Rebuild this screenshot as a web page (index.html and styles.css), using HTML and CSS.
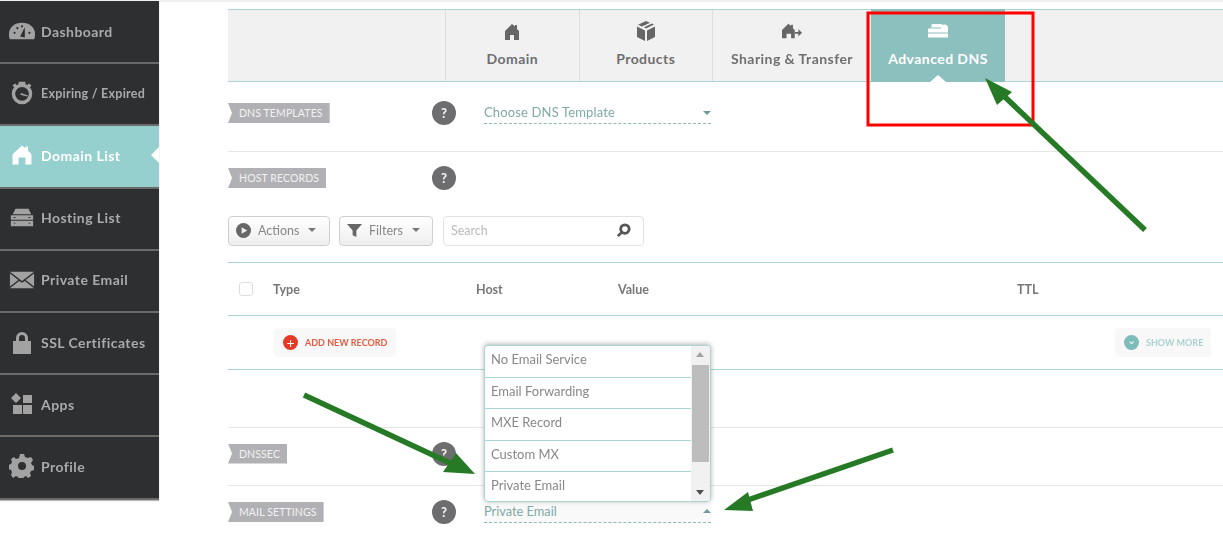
FILE: index.html
```html
<!DOCTYPE html>
<html lang="en">
<head>
<meta charset="utf-8">
<title>Advanced DNS</title>
<link rel="stylesheet" href="styles.css">
</head>
<body>
<div class="page">
  <div class="topstrip"></div>
  <div class="layout">
    <nav class="sidebar">
      <a class="nav-item"><svg class="nav-icon" viewBox="0 0 28 20"><path d="M1 19c-1-2-1-4-1-6C0 6 6 1 14 1s14 5 14 12c0 2 0 4-1 6z" fill="#a2a2a2"/><path d="M12 16l5-10 0 11z" fill="#2e2f30"/><circle cx="6" cy="12" r="1.2" fill="#2e2f30"/><circle cx="9" cy="7" r="1.2" fill="#2e2f30"/><circle cx="14" cy="5" r="1.2" fill="#2e2f30"/><circle cx="22" cy="12" r="1.2" fill="#2e2f30"/></svg><span>Dashboard</span></a>
      <a class="nav-item nav-small"><svg class="nav-icon" viewBox="0 0 28 28"><circle cx="14" cy="15" r="10" fill="none" stroke="#a2a2a2" stroke-width="4"/><path d="M10 1h8v3h-8zM3 5l3-2 2 2-3 3zM25 5l-3-2-2 2 3 3z" fill="#a2a2a2"/><path d="M13 14l8 3-1 1-8-2z" fill="#a2a2a2"/></svg><span>Expiring / Expired</span></a>
      <a class="nav-item nav-active"><svg class="nav-icon" viewBox="-2 -2 28 28"><path d="M12 1l4 3V2h3v5l4 4v12h-7v-8H8v8H1V11z" fill="#fff"/></svg><span>Domain List</span></a>
      <a class="nav-item"><svg class="nav-icon" viewBox="0 0 28 20"><path d="M7 0h14l3 6H4zM2 7h24v5H2zM2 13h24v6H2z" fill="#a2a2a2"/><path d="M5 9h2v1H5zM21 9h2v1h-2zM5 15h2v1H5zM21 15h2v1h-2z" fill="#2e2f30"/></svg><span>Hosting List</span></a>
      <a class="nav-item"><svg class="nav-icon" viewBox="0 0 28 20"><path d="M1 1h26L14 11zM1 3l9 7-9 7zM27 3l-9 7 9 7zM11 11l3 2 3-2 10 8H1z" fill="#a2a2a2"/></svg><span>Private Email</span></a>
      <a class="nav-item"><svg class="nav-icon" viewBox="0 0 24 24"><path d="M6 11V8a6 6 0 0 1 12 0v3h-3V8a3 3 0 0 0-6 0v3z M3 11h18v13H3z" fill="#a2a2a2"/></svg><span>SSL Certificates</span></a>
      <a class="nav-item"><svg class="nav-icon" viewBox="0 0 24 24"><path d="M6 1l5 5-5 5-5-5zM13 3h9v8h-9zM3 13h9v9H3zM13 13h9v9h-9z" fill="#a2a2a2"/></svg><span>Apps</span></a>
      <a class="nav-item"><svg class="nav-icon" viewBox="0 0 24 24"><path d="M10 0h4l1 3 3 1 3-1 2 3-2 3 1 2 2 1v4l-3 1-1 2 1 3-3 2-2-2-2 1-1 2h-4l-1-2-2-1-3 2-2-3 1-3-1-2-3-1v-4l3-1 1-2-1-3 3-2 2 2 3-1z" fill="#a2a2a2"/><circle cx="12" cy="12" r="4" fill="#2e2f30"/></svg><span>Profile</span></a>
    </nav>

    <main class="main">
      <div class="tabs">
        <div class="tab-spacer"></div>
        <div class="tab"><svg class="tab-icon" viewBox="0 0 16 16"><path d="M8 0l3 2.5V1h2v4l2 2v9h-5v-5H6v5H1V7z" fill="#666"/></svg><span>Domain</span></div>
        <div class="tab"><svg class="tab-icon tab-icon-big" viewBox="0 0 20 20"><path d="M10 0l4 1.800-8 3.800-4-1.800zM8 6.200l8-3.800 2 1.200-8 4zM1 5.500l8 4V20l-8-4zM19 5.500l-8 4V20l8-4z" fill="#666"/></svg><span>Products</span></div>
        <div class="tab tab-wide"><svg class="tab-icon tab-icon-big" viewBox="0 -2 22 20"><path d="M7 0l3 2.5V1h2v4l2 2v9h-4v-5H5v5H0V7z" fill="#666"/><path d="M14 9h4V6l4 4-4 4v-3h-4z" fill="#666"/></svg><span>Sharing &amp; Transfer</span></div>
        <div class="tab tab-active"><svg class="tab-icon tab-icon-big" viewBox="0 -3 20 20"><path d="M4 0h10l1 3.500H3zM0 4.500h20v4H0zM0 9.500h20v4H0z" fill="#fff"/><circle cx="16.500" cy="4" r="3.500" fill="#fff"/></svg><span>Advanced DNS</span></div>
      </div>

      <section class="row row-dns">
        <div class="tag">DNS TEMPLATES</div>
        <div class="help">?</div>
        <div class="select">Choose DNS Template<i class="caret-down"></i></div>
      </section>

      <section class="host">
        <div class="row-host">
          <div class="tag">HOST RECORDS</div>
          <div class="help">?</div>
        </div>
        <div class="toolbar">
          <button class="btn btn-actions"><svg class="btn-icon" viewBox="0 0 16 16"><circle cx="8" cy="8" r="8" fill="#666"/><path d="M6 4.500l6 3.500-6 3.500z" fill="#eee"/></svg>Actions<i class="btn-caret"></i></button>
          <button class="btn btn-filters"><svg class="btn-icon" viewBox="0 0 16 16"><path d="M0 1h16l-6 7v7l-4-2V8z" fill="#666"/></svg>Filters<i class="btn-caret"></i></button>
          <div class="search"><span>Search</span><svg class="search-icon" viewBox="0 0 16 16"><circle cx="9.500" cy="6.500" r="4.500" fill="none" stroke="#555" stroke-width="3"/><path d="M6 10l-4 4" stroke="#555" stroke-width="3"/></svg></div>
        </div>
      </section>

      <div class="thead">
        <i class="check"></i>
        <span>Type</span>
        <span>Host</span>
        <span>Value</span>
        <span>TTL</span>
      </div>

      <div class="actions-row">
        <div class="pill pill-add"><i class="dot dot-red">+</i>ADD NEW RECORD</div>
        <div class="pill pill-more"><i class="dot dot-teal">⌄</i>SHOW MORE</div>
      </div>

      <div class="blank"></div>

      <section class="row row-dnssec">
        <div class="tag">DNSSEC</div>
        <div class="help">?</div>
      </section>

      <section class="row row-mail">
        <div class="tag">MAIL SETTINGS</div>
        <div class="help">?</div>
        <div class="select select-open">Private Email<i class="caret-up"></i></div>
      </section>
    </main>
  </div>

  <div class="dropdown">
    <ul class="options">
      <li>No Email Service</li>
      <li>Email Forwarding</li>
      <li>MXE Record</li>
      <li>Custom MX</li>
      <li>Private Email</li>
    </ul>
    <div class="scrollbar"><i class="sb-up"></i><i class="sb-thumb"></i><i class="sb-down"></i></div>
  </div>

  <svg class="annotations" viewBox="0 0 1223 545">
    <rect x="868" y="13" width="165" height="112" fill="none" stroke="#f00" stroke-width="3"/>
    <g stroke="#267a25" stroke-width="5.500" fill="#267a25">
      <path d="M1145 230L1005 97"/>
      <path d="M304 395L450 463"/>
      <path d="M893 450L745 501"/>
    </g>
    <g fill="#267a25">
      <path d="M985 78L1012 92L997 105z"/>
      <path d="M475 474L456 453L443 472z"/>
      <path d="M724 510L748 492L753 511z"/>
    </g>
  </svg>
</div>
</body>
</html>
```
FILE: styles.css
```css
* { box-sizing: border-box; }
html, body { margin: 0; padding: 0; background: #fff; }
body { font-family: "Lato", "Liberation Sans", sans-serif; overflow: hidden; }
.page { position: relative; width: 1223px; height: 545px; overflow: hidden; filter: blur(0.5px); }
.topstrip { height: 2px; background: #efefef; }
.layout { display: flex; align-items: flex-start; }

.sidebar { width: 159px; flex: none; background: #2e2f30; margin-top: -1px; padding-top: 1px; box-shadow: 0 1px 1px #bbb; }
.nav-item { position: relative; display: flex; align-items: center; gap: 6px; height: 62.200px; padding: 0 0 2px 9px; border-bottom: 2px solid #6a6a6a; color: #a8aaab; font-size: 14px; font-weight: 700; letter-spacing: 0.45px; }
.nav-small { font-size: 12.500px; letter-spacing: 0.25px; }
.nav-icon { width: 26px; height: 24px; flex: none; }
.nav-active { background: #96d0ce; color: #fff; }
.nav-active::after { content: ""; position: absolute; right: 0; top: 21px; border: 8px solid transparent; border-left: 0; border-right-color: #fff; }

.main { flex: 1; margin-left: 69px; padding-top: 7px; }
.tabs { display: flex; height: 73px; background: #f1f1f1; border-top: 1px solid #a9d6d4; border-bottom: 1px solid #a9d6d4; }
.tab-spacer { width: 218px; border-right: 1px solid #ddd; }
.tab { width: 133.500px; display: flex; flex-direction: column; align-items: center; justify-content: flex-start; padding-top: 13px; border-right: 1px solid #ddd; color: #6f6f6f; font-size: 14px; font-weight: 700; letter-spacing: 0.45px; white-space: nowrap; }
.tab-wide { width: 158px; border-right: 0; }
.tab-active { position: relative; background: #8cc0bf; color: #fff; border-right: 0; margin-top: -1px; margin-bottom: -1px; padding-top: 14px; width: 134px; }
.tab-active::after { content: ""; position: absolute; left: 59px; bottom: 0; border: 8px solid transparent; border-top: 0; border-bottom: 7px solid #fff; }
.tab-icon { width: 16px; height: 16px; margin: 1px 0 10px; }
.tab-icon-big { width: 20px; height: 20px; margin: -2px 0 9px; }

.row { display: grid; grid-template-columns: 204px 52px 227px; align-items: center; }
.row-dns { height: 70px; border-bottom: 1px solid #e6e6e6; padding-bottom: 7px; }
.tag { justify-self: start; height: 20px; line-height: 20px; padding: 0 7px 0 11px; background: #b1b1b5; color: #f2f2f2; font-size: 10.500px; letter-spacing: 0.12px; clip-path: polygon(0 0, 100% 0, 100% 100%, 0 100%, 4px 50%); }
.help { width: 24px; height: 24px; border-radius: 50%; background: #6d6d6f; color: #eee; font-size: 13px; font-weight: 900; line-height: 24px; text-align: center; }
.select { position: relative; height: 22px; line-height: 20px; color: #7fa9a6; font-size: 13px; letter-spacing: 0.15px; border-bottom: 1px dashed #8fb9b6; }
.caret-down, .caret-up { position: absolute; right: 0; top: 9px; border: 4px solid transparent; border-bottom: 0; border-top: 4px solid #6f9c99; }
.caret-up { border-top: 0; border-bottom: 4px solid #6f9c99; }

.host { height: 110px; padding-top: 14px; }
.row-host { display: grid; grid-template-columns: 204px 52px; align-items: center; height: 22px; }
.toolbar { display: flex; gap: 9px; margin-top: 28px; }
.btn { display: flex; align-items: center; height: 30px; padding: 0 0 2px 7px; border: 1px solid #cfcfcf; border-radius: 4px; background: linear-gradient(#fff, #eee); color: #888; font: 12.500px "Lato", sans-serif; }
.btn-actions { width: 102px; }
.btn-filters { width: 94px; margin-right: 1px; }
.btn-icon { width: 15px; height: 15px; margin-right: 7px; }
.btn-caret { margin-left: 9px; border: 4px solid transparent; border-bottom: 0; border-top: 4px solid #777; }
.search { display: flex; align-items: center; justify-content: space-between; width: 201px; height: 30px; padding: 0 12px 2px 7px; border: 1px solid #e2e2e2; border-radius: 4px; color: #bbb; font-size: 12.500px; }
.search-icon { width: 15px; height: 15px; }

.thead { height: 54px; border-top: 1px solid #a9d6d4; border-bottom: 1px solid #a9d6d4; color: #777; font-size: 12.500px; font-weight: 700; display: grid; grid-template-columns: 34px 203px 142px 399px 1fr; align-items: center; padding-left: 11px; }
.check { width: 14px; height: 14px; border: 1px solid #ddd; border-radius: 3px; }
.actions-row { height: 54px; display: flex; justify-content: space-between; align-items: center; padding: 0 12px 0 46px; border-bottom: 1px solid #a9d6d4; }
.pill { display: flex; align-items: center; height: 29px; background: #f8f8f8; border-radius: 4px; font-size: 9px; font-weight: 700; }
.pill-add { width: 122px; padding-left: 9px; color: #e85c43; }
.pill-more { width: 96px; padding-left: 9px; color: #a9d2d0; }
.dot { width: 15px; height: 15px; border-radius: 50%; margin-right: 7px; text-align: center; color: #fff; font-style: normal; font-size: 14px; line-height: 15px; flex: none; font-weight: 400; }
.dot-red { background: #e33a27; }
.dot-teal { background: #7dbcba; line-height: 10px; font-size: 11px; }

.blank { height: 57px; }
.row-dnssec { height: 59px; border-top: 1px solid #e6e6e6; border-bottom: 1px solid #e6e6e6; padding-bottom: 6px; }
.row-mail { height: 52px; }
.select-open { background: #f9f9f9; height: 21px; line-height: 18px; letter-spacing: 0; font-size: 12.800px; }
.select-open .caret-up { top: 7px; }

.dropdown { position: absolute; left: 484px; top: 345px; width: 227px; height: 157px; display: flex; background: #fff; border: 1px solid #a9d6d4; border-radius: 4px; box-shadow: 0 -1px 5px rgba(0,0,0,.3); overflow: hidden; }
.options { list-style: none; margin: 0; padding: 0; flex: 1; }
.options li { height: 31.600px; line-height: 27px; padding-left: 6px; color: #888; font-size: 13px; border-bottom: 1px solid #a9d6d4; }
.options li:last-child { border-bottom: 0; }
.scrollbar { position: relative; width: 19px; flex: none; background: #f1f1f1; }
.sb-up, .sb-down { position: absolute; left: 5px; border: 4.500px solid transparent; }
.sb-up { top: 6px; border-top: 0; border-bottom: 5px solid #a3a3a3; }
.sb-down { bottom: 6px; border-bottom: 0; border-top: 5px solid #505050; }
.sb-thumb { position: absolute; left: 1px; right: 1px; top: 19px; height: 97px; background: #bdbdbd; }

.annotations { position: absolute; left: 0; top: 0; width: 1223px; height: 545px; }
```
